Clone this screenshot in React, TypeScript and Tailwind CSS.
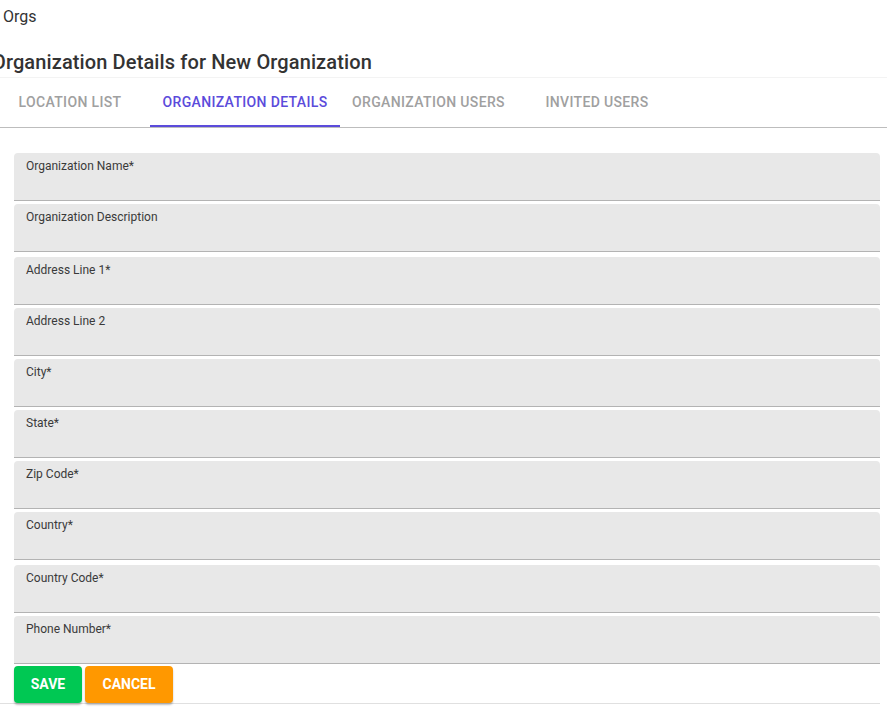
import React from 'react';

const fields: { label: string; gapAfter?: boolean }[] = [
  { label: 'Organization Name*' },
  { label: 'Organization Description', gapAfter: true },
  { label: 'Address Line 1*' },
  { label: 'Address Line 2' },
  { label: 'City*' },
  { label: 'State*' },
  { label: 'Zip Code*' },
  { label: 'Country*', gapAfter: true },
  { label: 'Country Code*' },
  { label: 'Phone Number*' },
];

const tabs = [
  { label: 'LOCATION LIST', w: 'w-[160px]' },
  { label: 'ORGANIZATION DETAILS', w: 'w-[190px]', active: true },
  { label: 'ORGANIZATION USERS', w: 'w-[177px]' },
  { label: 'INVITED USERS', w: 'w-[160px]' },
];

export default function App() {
  return (
    <div
      className="min-h-screen bg-white text-[#333] overflow-hidden"
      style={{ fontFamily: 'Roboto, "Liberation Sans", sans-serif' }}
    >
      <div className="ml-[-10px] w-[897px]">
        {/* breadcrumb */}
        <div className="pl-[13px] pt-[5px] h-[24px] text-[16px] leading-[24px] text-[#333]">Orgs</div>

        {/* title */}
        <h1 className="mt-[23px] pl-[2px] text-[20px] leading-[30px] font-medium tracking-[0.12px] text-[#333]">
          Organization Details for New Organization
        </h1>

        {/* tabs */}
        <div className="border-t border-[#f3f3f3] border-b border-b-[#bdbdbd]">
          <div className="flex h-[49px]">
            {tabs.map((t) => (
              <div
                key={t.label}
                className={`${t.w} relative flex items-center justify-center text-[14px] font-medium tracking-[0.35px] ${
                  t.active ? 'text-[#5b4bdb]' : 'text-[#a0a0a0]'
                }`}
              >
                {t.label}
                {t.active && <span className="absolute left-0 right-0 bottom-0 h-[2px] bg-[#5b4bdb]" />}
              </div>
            ))}
          </div>
        </div>

        {/* form */}
        <div className="ml-[10px] mr-[7px] pl-[14px] pt-[25px] border-b border-[#e0e0e0]">
          {fields.map((f) => (
            <div
              key={f.label}
              className={`h-[48px] ${f.gapAfter ? 'mb-[5px]' : 'mb-[3px]'} bg-[#e8e8e8] rounded-t-[4px] border-b border-[#b3b3b3] px-[12px] pt-[6px]`}
            >
              <div className="text-[12px] leading-[14px] text-[#3a3a3a]">{f.label}</div>
            </div>
          ))}
          <div className="flex gap-[3px] mt-[-1px]">
            <button className="w-[68px] h-[37px] rounded-[4px] bg-[#00c853] text-white text-[14px] font-bold shadow-[0_2px_2px_rgba(0,0,0,0.25)]">
              SAVE
            </button>
            <button className="w-[88px] h-[37px] rounded-[4px] bg-[#ff9800] text-white text-[14px] font-bold shadow-[0_2px_2px_rgba(0,0,0,0.25)]">
              CANCEL
            </button>
          </div>
        </div>
      </div>
    </div>
  );
}
